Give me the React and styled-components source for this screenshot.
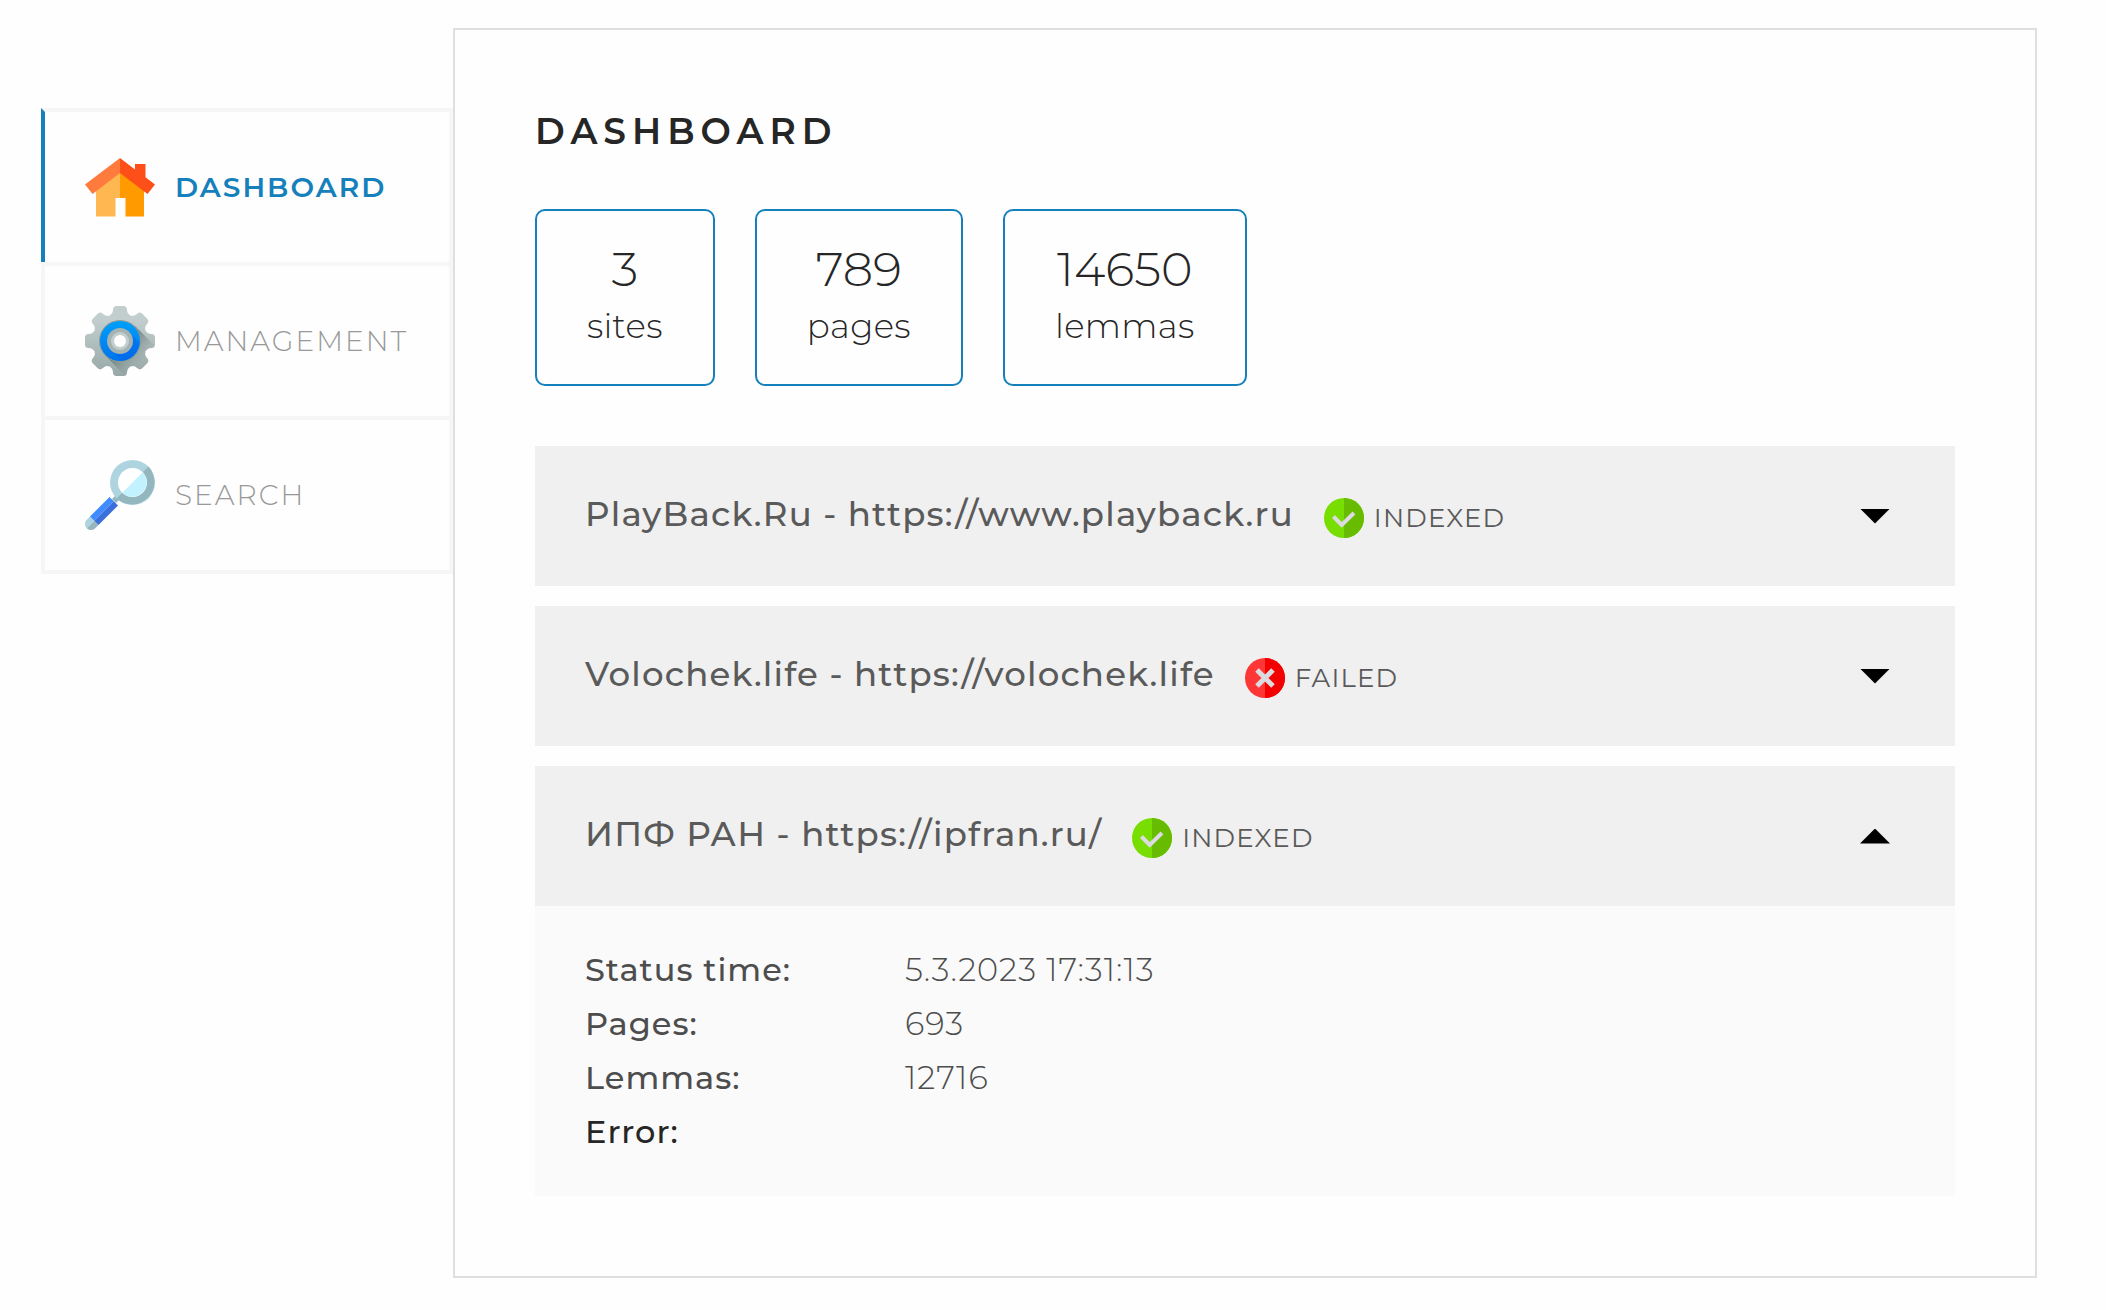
import React, { useState } from "react";
import styled, { createGlobalStyle } from "styled-components";

const GlobalStyle = createGlobalStyle`
  *, *::before, *::after { box-sizing: border-box; }
  body {
    margin: 0;
    background: #fefefe;
    color: #262626;
    font-family: Montserrat, Inter, "Open Sans", sans-serif;
  }
  h1, dl, dd, p { margin: 0; }
`;

const Page = styled.div`
  display: flex;
  align-items: flex-start;
  padding: 28px 69px 32px 41px;
`;

const Nav = styled.nav`
  display: flex;
  flex-direction: column;
  flex: 0 0 412px;
  margin-top: 80px;
`;

const NavLink = styled.a`
  display: flex;
  align-items: center;
  gap: 20px;
  height: ${(p) => (p.$last ? 158 : 154)}px;
  padding: 0 40px;
  border: 4px solid #f6f6f6;
  border-left-color: ${(p) => (p.$active ? "#1580bb" : "#f6f6f6")};
  border-bottom-width: ${(p) => (p.$last ? 4 : 0)}px;
  color: ${(p) => (p.$active ? "#1580bb" : "#999")};
  font-size: 28px;
  font-weight: ${(p) => (p.$active ? 600 : 350)};
  letter-spacing: 2px;
  text-transform: uppercase;
  text-decoration: none;
`;

const NavIcon = styled.svg`
  flex: none;
  width: 70px;
  height: 70px;
`;

const Panel = styled.main`
  flex: 1;
  min-width: 0;
  padding: 80px;
  border: 2px solid #dfdfdf;
`;

const Title = styled.h1`
  margin-bottom: 57px;
  font-size: 36px;
  font-weight: 600;
  line-height: 42px;
  letter-spacing: 6px;
  text-transform: uppercase;
`;

const Stats = styled.div`
  display: flex;
  flex-wrap: wrap;
  gap: 40px;
  margin-bottom: 60px;
`;

const Stat = styled.div`
  padding: 28px 50px 31px;
  border: 2px solid #1580bb;
  border-radius: 10px;
  text-align: center;
  font-weight: 350;
`;

const StatValue = styled.p`
  font-size: 48px;
  line-height: 60px;
`;

const StatLabel = styled.p`
  font-size: 34px;
  line-height: 54px;
  letter-spacing: 0.01em;
`;

const SiteList = styled.div`
  display: flex;
  flex-direction: column;
  gap: 20px;
`;

const SiteHeader = styled.button`
  display: flex;
  align-items: center;
  justify-content: space-between;
  width: 100%;
  height: 140px;
  padding: 0 65px 0 50px;
  border: 0;
  background: #f0f0f0;
  color: #5a5a5a;
  font: inherit;
  text-align: left;
  cursor: pointer;
`;

const SiteTitle = styled.span`
  display: flex;
  align-items: center;
  gap: 30px;
  padding-bottom: 4px;
  font-size: 34px;
  font-weight: 500;
  line-height: 44px;
  letter-spacing: 0.035em;
`;

const Status = styled.span`
  display: inline-flex;
  align-items: center;
  gap: 10px;
  padding-top: 8px;
  font-size: 26px;
  font-weight: 400;
  line-height: 40px;
`;

const StatusIcon = styled.svg`
  width: 40px;
  height: 40px;
`;

const Arrow = styled.span`
  width: 30px;
  height: 15px;
  background: #000;
  clip-path: ${(p) =>
    p.$open ? "polygon(50% 0, 100% 100%, 0 100%)" : "polygon(0 0, 100% 0, 50% 100%)"};
`;

const Details = styled.dl`
  display: flex;
  flex-direction: column;
  gap: 6px;
  padding: 40px 50px;
  background: #fafafa;
`;

const DetailRow = styled.div`
  display: grid;
  grid-template-columns: 320px 1fr;
  color: ${(p) => (p.$strong ? "#262626" : "#4d4d4d")};
  font-size: 32px;
  line-height: 48px;
  letter-spacing: 1px;
`;

const DetailName = styled.dt`
  font-weight: 500;
`;

const DetailValue = styled.dd`
  font-weight: 350;
`;

function HomeIcon() {
  return (
    <NavIcon viewBox="0 -1 70 70" aria-hidden="true">
      <path d="M35 14 11 33v30.500h19.500V45H35z" fill="#ffb751" />
      <path d="M35 14v31h5.500v18.500H59V33z" fill="#ff9a00" />
      <path d="M35 5 0 31.500 7.500 41 35 20z" fill="#ff7b3d" />
      <path d="M35 5v15l27.500 21 7.500-9.500-9.500-7.200V11H50v5.500z" fill="#ff4f18" />
    </NavIcon>
  );
}

function GearIcon() {
  return (
    <NavIcon viewBox="0 0 70 70" aria-hidden="true">
      <defs>
        <linearGradient id="gearBody" gradientUnits="userSpaceOnUse" x1="35" y1="0" x2="35" y2="70">
          <stop offset="0.2" stopColor="#c2cecd" />
          <stop offset="1" stopColor="#96a8a6" />
        </linearGradient>
        <linearGradient id="gearRing" x1="0" y1="0" x2="0" y2="1">
          <stop offset="0" stopColor="#00a0fa" />
          <stop offset="1" stopColor="#0073ee" />
        </linearGradient>
        <linearGradient id="gearShade" gradientUnits="userSpaceOnUse" x1="40" y1="40" x2="57" y2="57">
          <stop offset="0" stopColor="#5f6f6d" stopOpacity="0.7" />
          <stop offset="1" stopColor="#8a9a98" stopOpacity="0" />
        </linearGradient>
        <clipPath id="gearShape">
          <circle cx="35" cy="35" r="27.500" />
          {[0, 45, 90, 135, 180, 225, 270, 315].map((angle) => (
            <path
              key={angle}
              d="M25 9Q27.700 8 28 3.500 28.200 0 31.500 0H38.500Q41.800 0 42 3.500 42.300 8 45 9V16H25z"
              transform={`rotate(${angle} 35 35)`}
            />
          ))}
        </clipPath>
      </defs>
      <g clipPath="url(#gearShape)">
        <rect width="70" height="70" fill="url(#gearBody)" />
        <path d="M50 20 70 40v30H40L21 50z" fill="url(#gearShade)" />
      </g>
      <circle cx="35" cy="35" r="21" fill="#8b9c9b" />
      <circle cx="35" cy="35" r="20" fill="url(#gearRing)" />
      <path d="M44 26 54.500 36.500A20 20 0 0 1 36.500 54.500L26 44z" fill="#005fe8" opacity="0.45" />
      <circle cx="35" cy="35" r="13" fill="#a4b3b1" />
      <circle cx="35" cy="35" r="9" fill="#c2cecd" />
      <circle cx="35" cy="35" r="6" fill="#fff" />
    </NavIcon>
  );
}

function SearchIcon() {
  return (
    <NavIcon viewBox="0 0 70 70" aria-hidden="true">
      <path d="M27 39 34 32 38 36 31 43z" fill="#93b6bf" />
      <circle cx="47.500" cy="22.500" r="22.500" fill="#aed5df" />
      <path d="M63.400 6.600A22.500 22.500 0 0 1 31.600 38.400z" fill="#93b6bf" />
      <circle cx="47.500" cy="22.500" r="14.500" fill="#fff" />
      <path d="M57.750 12.250A14.500 14.500 0 0 1 37.250 32.750z" fill="#c2f2ff" />
      <path d="M5 56.500 9.250 60.750 1.750 68.250A6 6 0 0 1 1.750 59.750z" fill="#aed5df" />
      <path d="M9.250 60.750 13.500 65 10.250 68.250A6 6 0 0 1 1.750 68.250z" fill="#93b6bf" />
      <path d="M24.500 37 28.750 41.250 9.250 60.750 5 56.500z" fill="#3f8cff" />
      <path d="M28.750 41.250 33 45.500 13.500 65 9.250 60.750z" fill="#3b6fdc" />
    </NavIcon>
  );
}

function IndexedIcon() {
  return (
    <StatusIcon viewBox="0 0 40 40" aria-hidden="true">
      <circle cx="20" cy="20" r="20" fill="#78de00" />
      <path d="M20 0a20 20 0 0 1 0 40z" fill="#67bb00" />
      <path d="m9.500 18.500 8.200 8.500L30 15" fill="none" stroke="#dcdae2" strokeWidth="4" />
    </StatusIcon>
  );
}

function FailedIcon() {
  return (
    <StatusIcon viewBox="0 0 40 40" aria-hidden="true">
      <circle cx="20" cy="20" r="20" fill="#ff3636" />
      <path d="M20 0a20 20 0 0 1 0 40z" fill="#f40000" />
      <path d="m12 12 16 16M28 12 12 28" fill="none" stroke="#dcdce0" strokeWidth="5" />
    </StatusIcon>
  );
}

const navItems = [
  { label: "Dashboard", href: "#dashboard", Icon: HomeIcon },
  { label: "Management", href: "#management", Icon: GearIcon },
  { label: "Search", href: "#search", Icon: SearchIcon },
];

const stats = [
  { value: "3", label: "sites" },
  { value: "789", label: "pages" },
  { value: "14650", label: "lemmas" },
];

const sites = [
  { name: "PlayBack.Ru", url: "https://www.playback.ru", status: "INDEXED" },
  { name: "Volochek.life", url: "https://volochek.life", status: "FAILED" },
  {
    name: "ИПФ РАН",
    url: "https://ipfran.ru/",
    status: "INDEXED",
    details: [
      { name: "Status time:", value: "5.3.2023 17:31:13" },
      { name: "Pages:", value: "693" },
      { name: "Lemmas:", value: "12716" },
      { name: "Error:", value: "", strong: true },
    ],
  },
];

function Site({ site, open, onToggle }) {
  const Icon = site.status === "FAILED" ? FailedIcon : IndexedIcon;
  return (
    <section>
      <SiteHeader type="button" aria-expanded={open} onClick={onToggle}>
        <SiteTitle>
          {site.name} - {site.url}
          <Status>
            <Icon />
            {site.status}
          </Status>
        </SiteTitle>
        <Arrow $open={open} />
      </SiteHeader>
      {open && site.details && (
        <Details>
          {site.details.map((row) => (
            <DetailRow key={row.name} $strong={row.strong}>
              <DetailName>{row.name}</DetailName>
              <DetailValue>{row.value}</DetailValue>
            </DetailRow>
          ))}
        </Details>
      )}
    </section>
  );
}

export default function App() {
  const [openSite, setOpenSite] = useState(2);
  return (
    <>
      <GlobalStyle />
      <Page>
        <Nav>
          {navItems.map(({ label, href, Icon }, index) => (
            <NavLink
              key={label}
              href={href}
              $active={index === 0}
              $last={index === navItems.length - 1}
            >
              <Icon />
              {label}
            </NavLink>
          ))}
        </Nav>
        <Panel>
          <Title>Dashboard</Title>
          <Stats>
            {stats.map((stat) => (
              <Stat key={stat.label}>
                <StatValue>{stat.value}</StatValue>
                <StatLabel>{stat.label}</StatLabel>
              </Stat>
            ))}
          </Stats>
          <SiteList>
            {sites.map((site, index) => (
              <Site
                key={site.url}
                site={site}
                open={openSite === index}
                onToggle={() => setOpenSite(openSite === index ? -1 : index)}
              />
            ))}
          </SiteList>
        </Panel>
      </Page>
    </>
  );
}
